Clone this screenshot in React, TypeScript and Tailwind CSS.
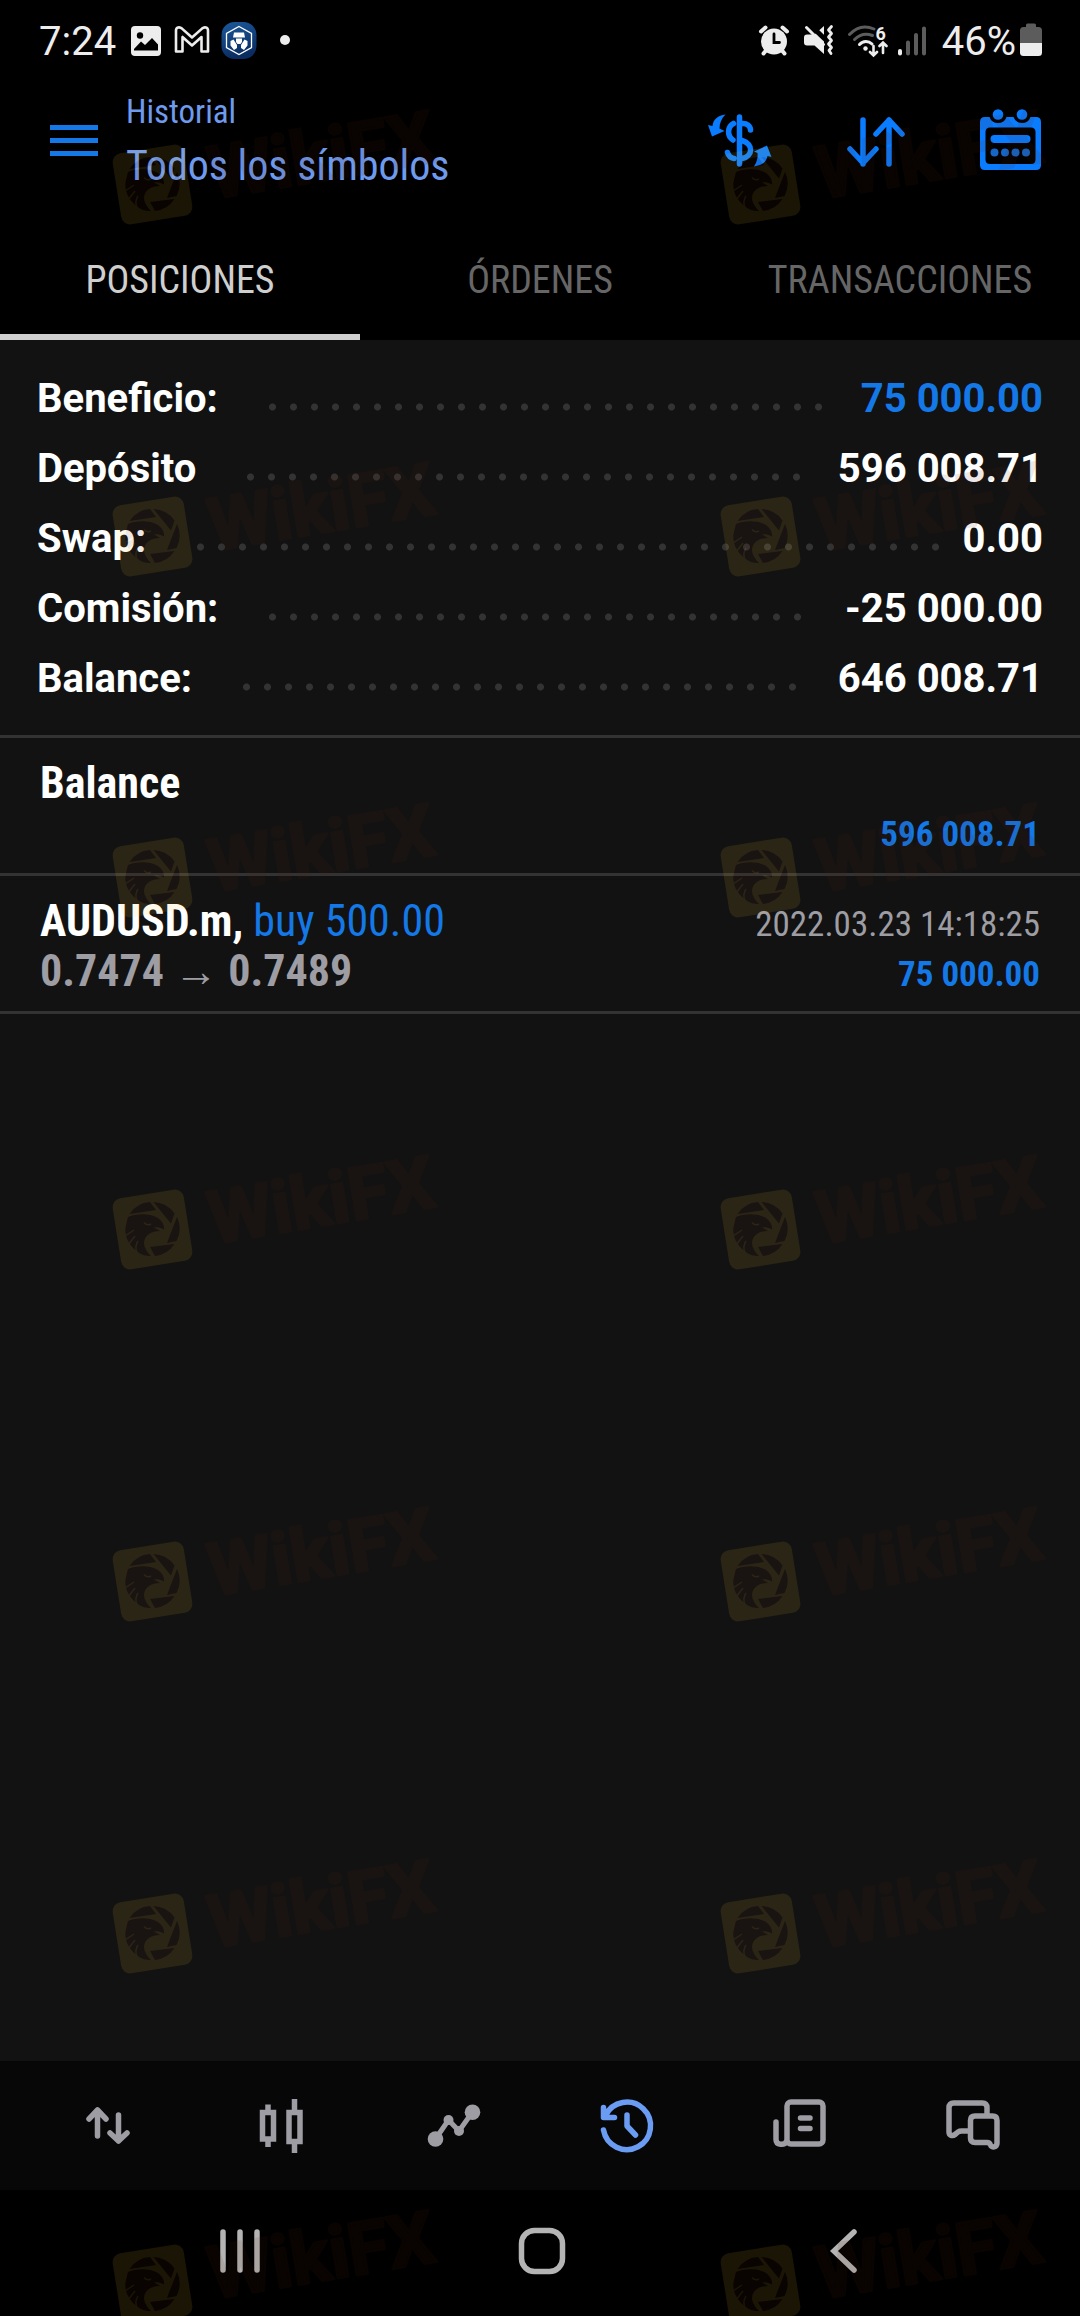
const watermarkTops = [85, 437, 778, 1130, 1482, 1834, 2185];

const summary = [
  { label: "Beneficio:", value: "75 000.00", blue: true },
  { label: "Depósito", value: "596 008.71" },
  { label: "Swap:", value: "0.00" },
  { label: "Comisión:", value: "-25 000.00" },
  { label: "Balance:", value: "646 008.71" },
];

const StatusBar = () => {
  return (
    <div className="flex h-[84px] items-center justify-between pr-[38px] pl-[39px] text-[40px] text-[#ededed]">
      <div className="flex items-center">
        <span className="mr-[15px]">7:24</span>
        <svg className="mr-[13px] mb-[3px]" width="30" height="30" viewBox="0 0 30 30">
          <rect width="30" height="30" rx="4" fill="#ededed" />
          <circle cx="9" cy="9.500" r="3.200" fill="#000" />
          <path d="M3 23 L10 15.500 L14 19 L21 12 L27 18.500 V24.500 H3 Z" fill="#000" />
        </svg>
        <svg className="mr-[11px] mb-1" width="36" height="30" viewBox="0 0 36 30">
          <path
            d="M2 26.500V5.500C2 2.200 5.500 1.500 8 3.600L18 12.500L28 3.600C30.500 1.500 34 2.200 34 5.500V26.500H27.500V12L18 20.500L8.500 12V26.500Z"
            fill="none"
            stroke="#ededed"
            strokeWidth="2.600"
            strokeLinejoin="round"
          />
        </svg>
        <svg className="mr-[23px] mb-1" width="36" height="37" viewBox="0 0 36 37">
          <defs>
            <linearGradient id="coin" x1="0" y1="0" x2="0.300" y2="1">
              <stop offset="0" stopColor="#1c5a9c" />
              <stop offset="1" stopColor="#0a2c61" />
            </linearGradient>
          </defs>
          <rect x="0.500" width="35" height="37" rx="13" fill="url(#coin)" />
          <path d="M18 4.500L30.500 11.500V25.500L18 32.500L5.500 25.500V11.500Z" fill="none" stroke="#fff" strokeWidth="1.300" />
          <path
            d="M13 10.500H23L24 15.500H12ZM15 16.500H21V20L19.500 22H16.500L15 20ZM9.500 19L12.500 17.500L16 23V26L13 28L9.500 23.500ZM26.500 19L23.500 17.500L20 23V26L23 28L26.500 23.500Z"
            fill="#fff"
          />
        </svg>
        <span className="mb-1 size-[10px] rounded-full bg-[#ededed]" />
      </div>
      <div className="flex items-center">
        <svg className="mr-3 mb-1" width="32" height="32" viewBox="0 0 32 32" stroke="#ededed" strokeLinecap="round">
          <circle cx="16" cy="17.500" r="13" fill="#ededed" stroke="none" />
          <path d="M3 7.500L7.500 3.500M29 7.500L24.500 3.500M5.500 29.500L8 26.500M26.500 29.500L24 26.500" strokeWidth="4" />
          <path d="M16 10V18.500H21.500" fill="none" stroke="#000" strokeWidth="2.800" />
        </svg>
        <svg className="mr-3 mb-1" width="32" height="32" viewBox="0 0 32 32">
          <path d="M22 2V30L12.500 21.500H5Q2 21.500 2 18.500V13.500Q2 10.500 5 10.500H12.500Z" fill="#ededed" />
          <path d="M6 -1L25 17" stroke="#000" strokeWidth="5" />
          <path d="M4.500 3.500L21.500 20.500" stroke="#ededed" strokeWidth="3" strokeLinecap="round" />
          <path
            d="M29.500 2.500L26.500 6L29.500 9.500L26.500 13L29.500 16.500L26.500 20L29.500 23.500L27 26.500L29 29.500"
            fill="none"
            stroke="#ededed"
            strokeWidth="2.800"
            strokeLinejoin="round"
            strokeLinecap="round"
          />
        </svg>
        <svg className="mr-[9px] mb-1" width="42" height="36" viewBox="0 0 42 36" fill="none" strokeLinecap="round" strokeWidth="3">
          <path d="M3.500 12.500C11 4.500 20 3.500 28 7" stroke="#5c5c5c" />
          <path d="M8.500 17.500C14 12 20 11 26.500 13.500" stroke="#5c5c5c" />
          <path d="M13.500 22.500C17 18.500 22.500 18.500 26 22" stroke="#ededed" />
          <circle cx="19.500" cy="26.500" r="2.200" fill="#ededed" />
          <path d="M27.500 24V33M24 30L27.500 33.500L31 30M37 31V21M33.500 24L37 20.500L40.500 24" stroke="#ededed" strokeWidth="2.600" />
          <text x="29.500" y="17.500" fill="#ededed" fontSize="18" fontWeight="700">6</text>
        </svg>
        <svg className="mr-[15px] mb-[3px]" width="30" height="32" viewBox="0 0 30 32" strokeWidth="4" strokeLinecap="round">
          <path d="M3 28.500V26" stroke="#ededed" />
          <path d="M11 28.500V17.500M19 28.500V10M27 28.500V3.500" stroke="#5c5c5c" />
        </svg>
        <span className="mr-1">46%</span>
        <svg className="mb-1" width="22" height="34" viewBox="0 0 22 34">
          <path d="M6 4V2Q6 0.500 7.500 0.500H14.500Q16 0.500 16 2V4H18.500Q22 4 22 7.500V20H0V7.500Q0 4 3.500 4Z" fill="#5c5c5c" />
          <path d="M0 20H22V29.500Q22 33 18.500 33H3.500Q0 33 0 29.500Z" fill="#ededed" />
        </svg>
      </div>
    </div>
  );
};

const Header = () => {
  return (
    <header className="flex h-[112px] items-center justify-between pr-[38px] pl-[50px] font-['Roboto_Condensed','Roboto',sans-serif] text-[#6f9bee]">
      <div className="flex items-center">
        <button aria-label="Menú" className="mr-7 flex flex-col gap-2">
          <span className="h-[5px] w-12 bg-[#1478e6]" />
          <span className="h-[5px] w-12 bg-[#1478e6]" />
          <span className="h-[5px] w-12 bg-[#1478e6]" />
        </button>
        <div className="pb-[2px]">
          <p className="text-[33px] leading-[54px]">Historial</p>
          <h1 className="text-[42px] leading-[54px]">Todos los símbolos</h1>
        </div>
      </div>
      <div className="flex items-center text-[#0a7cff]">
        <button aria-label="Moneda" className="mr-[63px]">
          <svg width="80" height="70" viewBox="0 0 80 70" fill="none" stroke="currentColor" strokeWidth="5.500" strokeLinecap="round">
            <path d="M39.500 12V59M42 18.500C47 18 50.500 21 50.500 25M33.500 18.500C27 22 27 31 33 35M42 35.500C54 39 53 51.500 42 53.500M27.500 47.500C28.500 51 31 53 34 53.500" />
            <path
              d="M25.500 9.500C18 10.500 13 14.500 12.500 21L8 20L12 31.500L24.500 26L19.500 23.500C19.500 18 21.500 13.500 25.500 9.500Z"
              fill="currentColor"
              stroke="none"
            />
            <path
              d="M54 61.500C57 57 58 52 57.500 48L54 46.500L67 40.500L71.500 52L67.500 51C66.500 57 62 60.500 54 61.500Z"
              fill="currentColor"
              stroke="none"
            />
          </svg>
        </button>
        <button aria-label="Ordenar" className="mr-[71px]">
          <svg width="64" height="60" viewBox="0 0 64 60" fill="none" stroke="currentColor" strokeWidth="5.500" strokeLinecap="round" strokeLinejoin="round">
            <path d="M20 10V54M7 39L20 53L33 39M46 54V10M33 24L46 10L59 24" />
          </svg>
        </button>
        <button aria-label="Calendario">
          <svg width="64" height="64" viewBox="0 0 64 64">
            <path
              fillRule="evenodd"
              d="M7 9H11.500A9 9 0 0 0 28.500 9H35.500A9 9 0 0 0 52.500 9H58Q63 9 63 14V57Q63 62 58 62H7Q2 62 2 57V14Q2 9 7 9ZM12 19.500Q7.500 19.500 7.500 24V51.500Q7.500 56 12 56H53Q57.500 56 57.500 51.500V24Q57.500 19.500 53 19.500Z"
              fill="currentColor"
            />
            <circle cx="20" cy="6.500" r="5.300" fill="currentColor" />
            <circle cx="44" cy="6.500" r="5.300" fill="currentColor" />
            <path d="M16.500 31H48.500" stroke="currentColor" strokeWidth="8" strokeLinecap="round" />
            <g fill="#1466c8">
              <circle cx="16.500" cy="44.500" r="4" />
              <circle cx="27" cy="44.500" r="4" />
              <circle cx="37.500" cy="44.500" r="4" />
              <circle cx="48" cy="44.500" r="4" />
            </g>
          </svg>
        </button>
      </div>
    </header>
  );
};

const Tabs = () => {
  return (
    <div role="tablist" className="grid h-36 grid-cols-3 font-['Roboto_Condensed','Roboto',sans-serif] text-[38px] text-[#666666]">
      <button role="tab" aria-selected="true" className="border-b-6 border-[#cfcfcf] pt-[30px] text-[#cfcfcf]">
        POSICIONES
      </button>
      <button role="tab" aria-selected="false" className="border-b-6 border-black pt-[30px]">
        ÓRDENES
      </button>
      <button role="tab" aria-selected="false" className="border-b-6 border-black pt-[30px]">
        TRANSACCIONES
      </button>
    </div>
  );
};

const Summary = () => {
  return (
    <dl className="border-b-3 border-[#333333] px-[37px] pt-6 pb-[21px] text-[40px] font-bold text-white">
      {summary.map((row) => (
        <div key={row.label} className="flex h-[70px] items-center">
          <dt>{row.label}</dt>
          <div className="mr-4 ml-[44px] flex-1 pt-4">
            <div className="h-2 w-[round(down,100%,21px)] bg-[radial-gradient(circle,#333333_3px,transparent_4px)] bg-[length:21px_8px]" />
          </div>
          <dd className={row.blue ? "text-[#1478e6]" : ""}>{row.value}</dd>
        </div>
      ))}
    </dl>
  );
};

const Deals = () => {
  return (
    <ul className="font-['Roboto_Condensed','Roboto',sans-serif]">
      <li className="border-b-3 border-[#333333] px-10 pt-5 pb-[15px]">
        <p className="text-[44px] leading-[50px] font-bold text-white">Balance</p>
        <p className="pt-1 text-right text-[35px] leading-[46px] font-bold text-[#1478e6]">596 008.71</p>
      </li>
      <li className="border-b-3 border-[#333333] px-10 pt-5 pb-[15px]">
        <div className="flex items-baseline justify-between">
          <p className="text-[44px] leading-[50px] text-[#1478e6]">
            <span className="font-bold text-white">AUDUSD.m,</span> buy 500.00
          </p>
          <p className="text-[35px] leading-10 text-[#9d9da3]">2022.03.23 14:18:25</p>
        </div>
        <div className="flex items-baseline justify-between font-bold">
          <p className="text-[44px] leading-[50px] text-[#9d9da3]">0.7474 → 0.7489</p>
          <p className="text-[35px] leading-10 text-[#1478e6]">75 000.00</p>
        </div>
      </li>
    </ul>
  );
};

const BottomNav = () => {
  return (
    <nav className="grid h-[129px] grid-cols-6 bg-[#070707] px-[21px] text-[#9d9da3]">
      <button aria-label="Cotizaciones" className="flex items-center justify-center">
        <svg width="64" height="64" viewBox="0 0 64 64" fill="none" stroke="currentColor" strokeWidth="5.500" strokeLinecap="round" strokeLinejoin="round">
          <path d="M21.500 42V16M13 25L21.500 16L30 25M42.500 21V47M34 39L42.500 47L51 39" />
        </svg>
      </button>
      <button aria-label="Gráficos" className="flex items-center justify-center">
        <svg width="64" height="64" viewBox="0 0 64 64" fill="none" stroke="currentColor" strokeWidth="5.500">
          <path d="M13.500 18.500H24.500V45H13.500ZM19 10.500V18M19 45V53M40 18.500H51V47.500H40ZM45.500 5V18M45.500 48V59" />
        </svg>
      </button>
      <button aria-label="Operaciones" className="flex items-center justify-center">
        <svg width="64" height="64" viewBox="0 0 64 64" fill="currentColor" stroke="currentColor" strokeWidth="5">
          <path d="M13.500 45L26.500 26L37 37L50.500 18" fill="none" />
          <g stroke="none">
            <circle cx="13.500" cy="45" r="7.800" />
            <circle cx="26.500" cy="26" r="5" />
            <circle cx="37" cy="37" r="5" />
            <circle cx="50.500" cy="18.300" r="7.800" />
          </g>
        </svg>
      </button>
      <button aria-label="Historial" className="flex items-center justify-center text-[#6a9cf4]">
        <svg width="64" height="64" viewBox="0 0 64 64" fill="none" stroke="currentColor" strokeWidth="5.500" strokeLinecap="round" strokeLinejoin="round">
          <path d="M8.500 36A23.700 23.700 0 1 0 10.500 21.500M8.500 13.500V23.500H19.500M32 21V32L40.500 41" />
        </svg>
      </button>
      <button aria-label="Noticias" className="flex items-center justify-center">
        <svg width="64" height="64" viewBox="0 0 64 64" fill="none" stroke="currentColor" strokeWidth="5.500" strokeLinecap="round" strokeLinejoin="round">
          <rect x="19" y="8" width="36" height="42" rx="4" />
          <path d="M8 28V45.500C8 51.500 16.500 51.500 18.500 47.500M32.500 24H42M32.500 34.500H42" />
        </svg>
      </button>
      <button aria-label="Mensajes" className="flex items-center justify-center">
        <svg width="64" height="64" viewBox="0 0 64 64" fill="none" stroke="currentColor" strokeWidth="5.500" strokeLinecap="round" strokeLinejoin="round">
          <path d="M46 21V13.500Q46 9 41.500 9H12.500Q8 9 8 13.500V38C8 41.500 11.500 42.500 14 40.500L17 38Q18.500 37 20.500 37H28" />
          <path d="M34 22H51.500Q56 22 56 26.500V49C56 53.500 50.500 54 49.500 51C49 49.500 48 48.500 46 48.500H34Q29.500 48.500 29.500 44V26.500Q29.500 22 34 22Z" />
        </svg>
      </button>
    </nav>
  );
};

const SystemNav = () => {
  return (
    <nav className="grid h-[126px] grid-cols-3 bg-black pr-[85px] pb-[5px] pl-[89px] text-[#b4b4b4]">
      <button aria-label="Recientes" className="flex items-center justify-center">
        <svg width="48" height="48" viewBox="0 0 48 48" stroke="currentColor" strokeWidth="5.500" strokeLinecap="round">
          <path d="M7 5V43M24 5V43M41 5V43" />
        </svg>
      </button>
      <button aria-label="Inicio" className="flex items-center justify-center">
        <svg width="48" height="48" viewBox="0 0 48 48" fill="none" stroke="currentColor" strokeWidth="5.500">
          <rect x="3.500" y="3.500" width="41" height="41" rx="13" />
        </svg>
      </button>
      <button aria-label="Atrás" className="flex items-center justify-center">
        <svg width="48" height="48" viewBox="0 0 48 48" fill="none" stroke="currentColor" strokeWidth="5.500" strokeLinecap="round">
          <path d="M34 5L14 24L34 43" />
        </svg>
      </button>
    </nav>
  );
};

const Watermark = () => {
  return (
    <svg width="340" height="130" viewBox="0 0 340 130" className="ml-[108px] overflow-visible font-['Roboto',sans-serif]">
      <g opacity="0.100">
        <rect x="8.500" y="63.500" width="72" height="72" rx="9" transform="rotate(-9 44.500 99.500)" fill="#ffc832" />
        <g transform="translate(0 54)">
          <g fill="#5a1e0a">
            <path d="M21.500 30A27 27 0 0 1 42 18L48 26Z" />
            <path d="M45.500 18A27 27 0 0 1 66.500 29.500L63 39.500Z" />
            <path d="M69 33A27 27 0 0 1 68.500 57L59 59Z" />
            <path d="M42 63L66.500 60A27 27 0 0 1 47 72Z" />
            <path d="M20 33C28 30 40 28.500 50 34C54 37 56.500 41 56 45.500C52 43 48 43 46 43.500L52 47C43 47 36.500 51 36 59C36 64 40 69 43 72C37 72 33 70.500 30 68C24 64 16 55 17.500 43Z" />
          </g>
          <path d="M36 38.500C38 41 41 41 43 40M17 52L26 46M20 61L27 52M29 69C27 64 28 60 30 57" fill="none" stroke="#ffc832" strokeWidth="1.500" />
        </g>
        <text
          x="105"
          y="114"
          transform="rotate(-9.500 105 114)"
          fontSize="73"
          fontWeight="700"
          fill="#5a1e0a"
          stroke="#5a1e0a"
          strokeWidth="3"
          strokeLinejoin="round"
        >
          WikiFX
        </text>
      </g>
    </svg>
  );
};

const App = () => {
  return (
    <div className="relative flex min-h-screen flex-col overflow-hidden bg-[#121212] font-['Roboto',sans-serif]">
      <div className="bg-black">
        <StatusBar />
        <Header />
        <Tabs />
      </div>
      <main className="flex-1">
        <Summary />
        <Deals />
      </main>
      <BottomNav />
      <SystemNav />
      <div aria-hidden="true" className="pointer-events-none absolute inset-0 overflow-hidden">
        {watermarkTops.map((top) => (
          <div key={top} className="absolute grid w-full grid-cols-[56.3%_1fr]" style={{ top }}>
            <Watermark />
            <Watermark />
          </div>
        ))}
      </div>
    </div>
  );
};

export default App;
